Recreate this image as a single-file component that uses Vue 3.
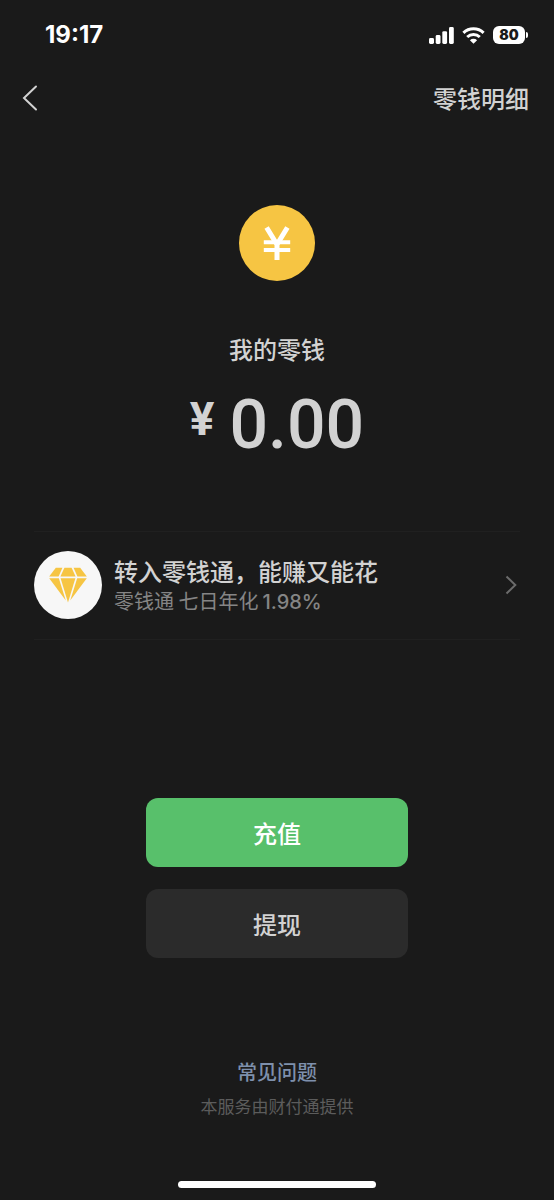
<script setup>
const balance = '0.00'
const battery = 80
const rate = '1.98%'
</script>

<template>
  <div class="screen">
    <div class="status">
      <time class="clock">19:17</time>
      <div class="indicators">
        <svg class="signal" viewBox="0 0 25 17" aria-hidden="true">
          <rect x="0" y="11" width="5" height="6" rx="1.4" />
          <rect x="6.7" y="8" width="4.8" height="9" rx="1.4" />
          <rect x="13.3" y="4.2" width="4.8" height="12.8" rx="1.4" />
          <rect x="20" y="0" width="4.8" height="17" rx="1.4" />
        </svg>
        <svg class="wifi" viewBox="0 0 23 17" aria-hidden="true">
          <path class="arc" d="M1.4 5.9a14.6 14.6 0 0 1 20.2 0" />
          <path class="arc" d="M5.2 10a9.2 9.2 0 0 1 12.6 0" />
          <path d="M11.5 16.8 7.9 13.2a5.2 5.2 0 0 1 7.2 0z" />
        </svg>
        <div class="battery"><span class="level">{{ battery }}</span><i class="cap"></i></div>
      </div>
    </div>

    <header class="nav">
      <button class="back" type="button" aria-label="返回">
        <svg viewBox="0 0 16 26" aria-hidden="true"><path d="M14 1.5 2 13l12 11.5" /></svg>
      </button>
      <a class="detail" href="#detail">零钱明细</a>
    </header>

    <main class="main">
      <svg class="coin" viewBox="0 0 76 76" aria-hidden="true">
        <circle cx="38" cy="38" r="38" />
        <path class="thick" d="M27.6 22.5 38 39.5l10.4-17M38 38v17" />
        <path d="M24.8 37.2h26.4M24.8 45h26.4" />
      </svg>
      <h1 class="label">我的零钱</h1>
      <p class="amount"><span class="sign">¥</span><span>{{ balance }}</span></p>

      <a class="promo" href="#lqt">
        <svg class="gem" viewBox="0 0 68 68" aria-hidden="true">
          <circle cx="34" cy="34" r="34" />
          <g>
            <path d="M21.8 16.8h6.6L24.6 25.4H15.2z" />
            <path d="M30.4 16.8h7.2L41.6 25.4H26.4z" />
            <path d="M39.6 16.8h6.6L52.8 25.4H43.4z" />
            <path d="M15.2 27.3h9.6l7 22.3z" />
            <path d="M26.6 27.3h14.8L34 51.4z" />
            <path d="M43.2 27.3h9.6L36.2 49.6z" />
          </g>
        </svg>
        <span class="copy">
          <span class="title">转入零钱通，能赚又能花</span>
          <span class="sub">零钱通 七日年化<span class="rate">{{ rate }}</span></span>
        </span>
        <svg class="chevron" viewBox="0 0 12 20" aria-hidden="true"><path d="m1.5 1.5 8.8 8.5-8.8 8.5" /></svg>
      </a>

      <div class="actions">
        <button class="btn primary" type="button">充值</button>
        <button class="btn" type="button">提现</button>
      </div>
    </main>

    <footer class="footer">
      <a class="faq" href="#faq">常见问题</a>
      <p class="provider">本服务由财付通提供</p>
      <div class="home"></div>
    </footer>
  </div>
</template>

<style>
body {
  margin: 0;
  background: #1a1a1a;
}
</style>

<style scoped>
.screen {
  box-sizing: border-box;
  min-height: 100vh;
  display: flex;
  flex-direction: column;
  background: #1a1a1a;
  color: #d2d2d2;
  font-family: "Noto Sans CJK SC", sans-serif;
  font-weight: 500;
}
a {
  color: inherit;
  text-decoration: none;
}
p,
h1 {
  margin: 0;
  font-weight: 500;
}
button {
  font: inherit;
  color: inherit;
  border: 0;
  padding: 0;
  background: none;
  cursor: pointer;
}
svg {
  display: block;
  flex: none;
}
.status {
  height: 70px;
  padding: 0 26px 0 45px;
  display: flex;
  align-items: center;
  justify-content: space-between;
}
.clock {
  font: 700 24px/30px Inter, sans-serif;
  color: #fff;
}
.indicators {
  display: flex;
  align-items: center;
  gap: 8px;
  fill: #fff;
}
.signal {
  width: 25px;
  height: 17px;
}
.wifi {
  width: 23px;
  height: 17px;
}
.arc {
  fill: none;
  stroke: #fff;
  stroke-width: 3;
}
.battery {
  display: flex;
  align-items: center;
  gap: 1px;
}
.level {
  width: 32px;
  border-radius: 6px;
  background: #fff;
  color: #1a1a1a;
  font: 900 14px/18px Inter, sans-serif;
  text-align: center;
}
.cap {
  width: 2px;
  height: 6px;
  border-radius: 0 2px 2px 0;
  background: #fff;
}
.nav {
  height: 56px;
  padding: 0 25px 0 22px;
  display: flex;
  align-items: center;
  justify-content: space-between;
}
.back svg {
  width: 16px;
  height: 26px;
  fill: none;
  stroke: #d2d2d2;
  stroke-width: 2;
  stroke-linecap: round;
}
.detail,
.label,
.title {
  font-size: 24px;
  line-height: 32px;
}
.main {
  display: flex;
  flex-direction: column;
  align-items: center;
  padding: 79px 34px 0;
}
.coin {
  width: 76px;
  height: 76px;
  fill: #f6c543;
}
.coin path {
  fill: none;
  stroke: #fff;
  stroke-width: 4;
}
.coin .thick {
  stroke-width: 5;
}
.label {
  margin-top: 52px;
}
.amount {
  margin-top: 20px;
  display: flex;
  align-items: flex-start;
  gap: 15px;
  font: 500 68px/80px Roboto, sans-serif;
}
.sign {
  font-size: 46px;
  font-weight: 700;
  line-height: 68px;
}
.promo {
  box-sizing: border-box;
  width: 100%;
  margin-top: 66px;
  padding: 19px 3px 20px 0;
  border-top: 1px solid #202020;
  border-bottom: 1px solid #202020;
  display: flex;
  align-items: center;
}
.gem {
  width: 68px;
  height: 68px;
  fill: #f7f7f7;
}
.gem g {
  fill: #f6c543;
}
.copy {
  flex: 1;
  margin-left: 12px;
  display: flex;
  flex-direction: column;
}
.sub {
  color: #858585;
  font-size: 20px;
  line-height: 28px;
  font-weight: 400;
}
.rate {
  margin-left: 4px;
  font-family: Inter, sans-serif;
  font-weight: 500;
}
.chevron {
  width: 12px;
  height: 20px;
  fill: none;
  stroke: #6c6c6c;
  stroke-width: 2;
}
.actions {
  width: 262px;
  margin-top: 158px;
  display: flex;
  flex-direction: column;
  gap: 22px;
}
.btn {
  border-radius: 12px;
  padding: 18px 0;
  background: #2b2b2b;
  font-size: 24px;
  line-height: 33px;
}
.primary {
  background: #58c06b;
  color: #fff;
}
.footer {
  flex: 1;
  display: flex;
  flex-direction: column;
  align-items: center;
  padding: 100px 0 12px;
}
.faq {
  color: #7e90ac;
  font-size: 20px;
  line-height: 28px;
}
.provider {
  margin-top: 8px;
  color: #5c5c5c;
  font-size: 17px;
  line-height: 24px;
  font-weight: 400;
}
.home {
  width: 198px;
  height: 7px;
  margin-top: auto;
  border-radius: 4px;
  background: #fff;
}
</style>
